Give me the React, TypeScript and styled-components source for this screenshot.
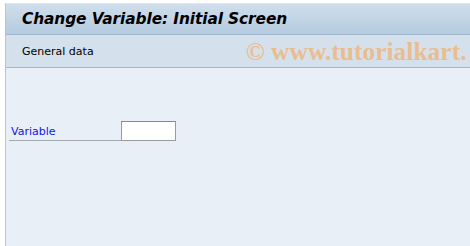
import React from "react";
import styled, { createGlobalStyle } from "styled-components";

const Global = createGlobalStyle`
  html, body { margin: 0; padding: 0; background: #ffffff; }
  body { width: 470px; height: 246px; overflow: hidden; }
`;

const Page = styled.div`
  width: 470px;
  height: 246px;
  padding: 3px 0 0 5px;
  box-sizing: border-box;
  background: #ffffff;
`;

const Frame = styled.div`
  height: 100%;
  display: flex;
  flex-direction: column;
  border-left: 1px solid #b9c4cf;
  border-top: 1px solid #dfe6ee;
  background: #e8eff7;
`;

const TitleBar = styled.div`
  height: 30px;
  display: flex;
  align-items: center;
  padding-left: 16px;
  background: linear-gradient(#d0deeb, #b5cbe0);
  border-bottom: 1px solid #9fb6cd;
`;

const Title = styled.h1`
  margin: 0;
  font-family: "DejaVu Sans", Verdana, sans-serif;
  font-size: 15.4px;
  font-weight: bold;
  font-style: italic;
  color: #000000;
  letter-spacing: -0.1px;
`;

const Toolbar = styled.div`
  height: 32px;
  display: flex;
  align-items: center;
  gap: 152px;
  padding-left: 16px;
  background: #d4e1ec;
  border-bottom: 1px solid #a9b8c6;
  overflow: hidden;
`;

const ToolText = styled.span`
  font-family: "DejaVu Sans", Verdana, sans-serif;
  font-size: 11px;
  color: #000000;
  white-space: nowrap;
`;

const Watermark = styled.span`
  font-family: "Liberation Serif", "Times New Roman", serif;
  font-weight: bold;
  font-size: 25.5px;
  color: #eabd91;
  white-space: nowrap;
  padding-top: 2px;
`;

const Content = styled.div`
  flex: 1;
  padding: 53px 0 0 3px;
`;

const FieldRow = styled.div`
  display: flex;
  align-items: flex-end;
`;

const Label = styled.label`
  width: 112px;
  box-sizing: border-box;
  padding: 0 0 2px 2px;
  border-bottom: 1px solid #a3abb3;
  font-family: "DejaVu Sans", Verdana, sans-serif;
  font-size: 11px;
  color: #1414e6;
`;

const Input = styled.input`
  width: 55px;
  height: 20px;
  box-sizing: border-box;
  margin: 0;
  border: 1px solid #9a9a9a;
  border-top-color: #8a8a8a;
  background: #ffffff;
  padding: 0 3px;
  outline: none;
`;

export default function App() {
  return (
    <>
      <Global />
      <Page>
        <Frame>
          <TitleBar>
            <Title>Change Variable: Initial Screen</Title>
          </TitleBar>
          <Toolbar>
            <ToolText>General data</ToolText>
            <Watermark>© www.tutorialkart.</Watermark>
          </Toolbar>
          <Content>
            <FieldRow>
              <Label>Variable</Label>
              <Input />
            </FieldRow>
          </Content>
        </Frame>
      </Page>
    </>
  );
}
